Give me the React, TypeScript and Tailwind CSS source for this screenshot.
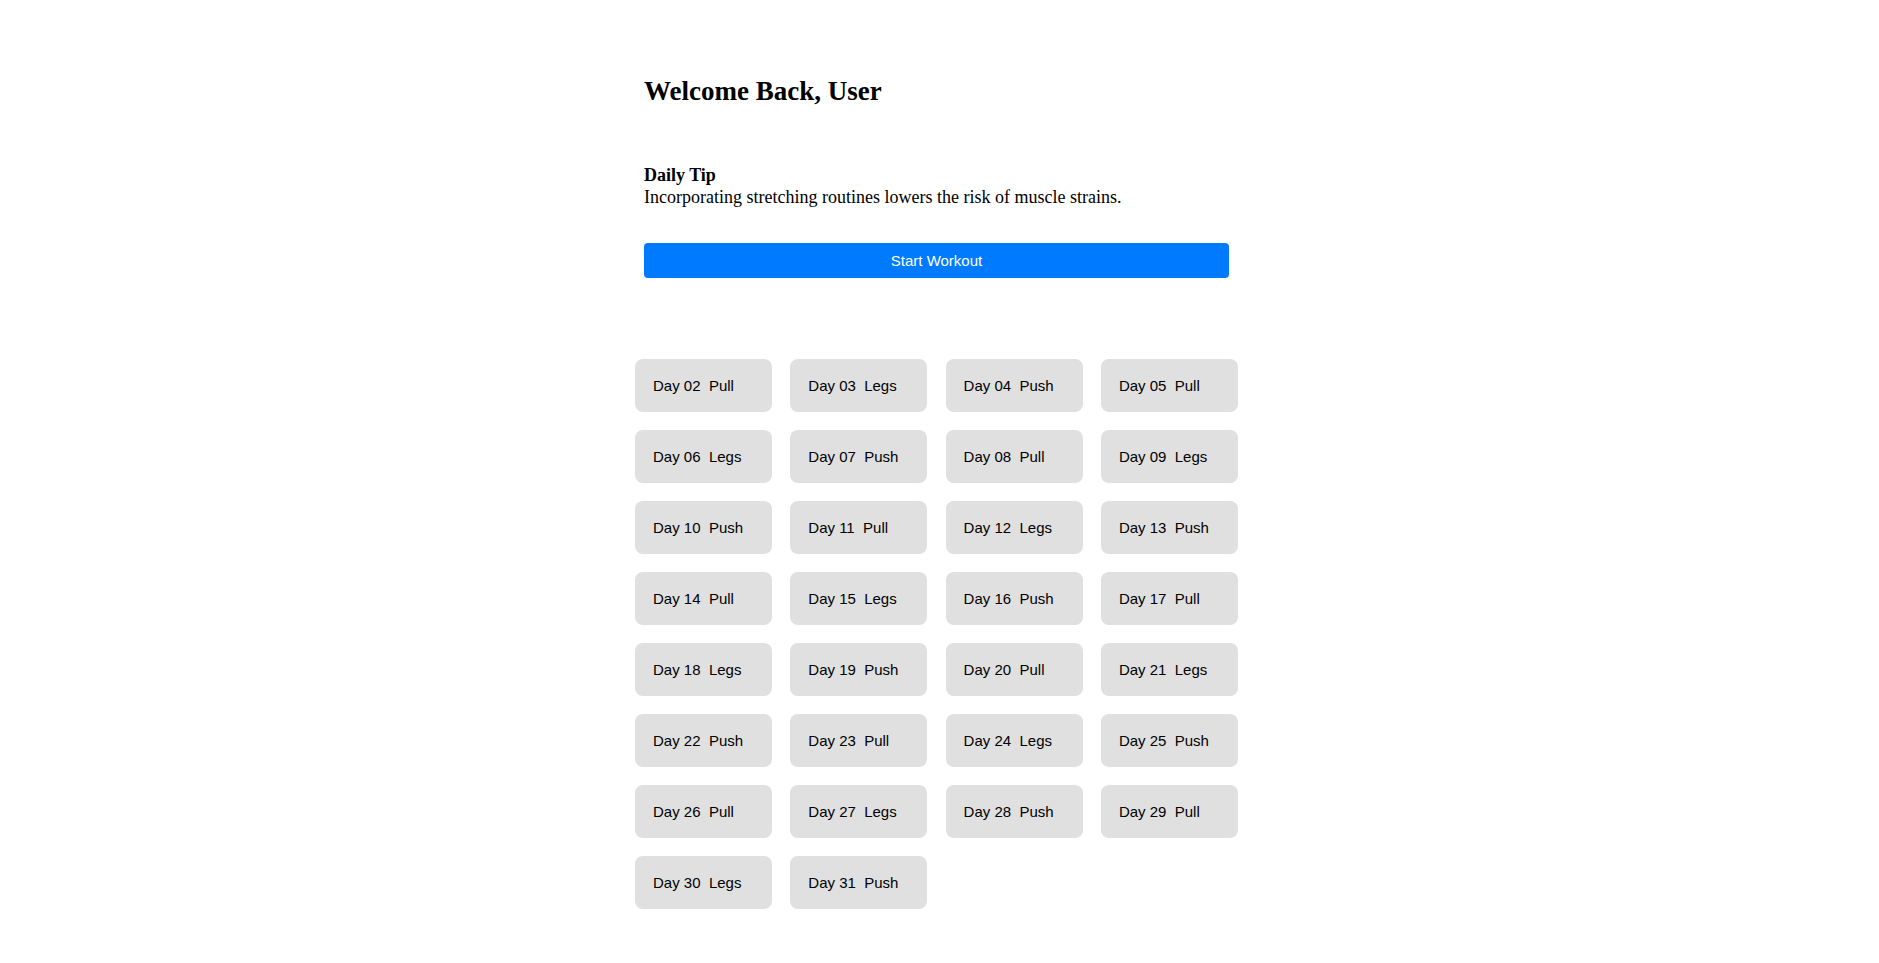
const plan = ['Legs', 'Push', 'Pull']

const days = Array.from({ length: 30 }, (_, i) => {
  const n = i + 2
  return { label: `Day ${String(n).padStart(2, '0')}`, type: plan[n % 3] }
})

export default function App() {
  return (
    <div className="min-h-screen bg-white text-black pl-[635px] pt-[76px] pb-[40px]">
      <div className="pl-[9px] w-[594px] font-['Liberation_Serif',serif]">
        <h2 className="text-[27px] leading-[31px] font-bold">Welcome Back, User</h2>

        <div className="mt-[57px] text-[18px] leading-[22px]">
          <p className="font-bold">Daily Tip</p>
          <p>Incorporating stretching routines lowers the risk of muscle strains.</p>
        </div>

        <button className="mt-[35px] w-[585px] h-[35px] pt-[2px] rounded-[4px] bg-[#007bff] text-white text-[15px] font-['Liberation_Sans',Arial,sans-serif] flex items-center justify-center">
          Start Workout
        </button>
      </div>

      <div className="mt-[81px] grid grid-cols-[repeat(4,137px)] gap-x-[18.3px] gap-y-[18px] w-max font-['Liberation_Sans',Arial,sans-serif]">
        {days.map((d) => (
          <div
            key={d.label}
            className="h-[53px] rounded-[8px] bg-[#e0e0e0] pl-[18px] pt-[2px] flex items-center text-[15px] whitespace-pre"
          >
            {d.label}  {d.type}
          </div>
        ))}
      </div>
    </div>
  )
}
